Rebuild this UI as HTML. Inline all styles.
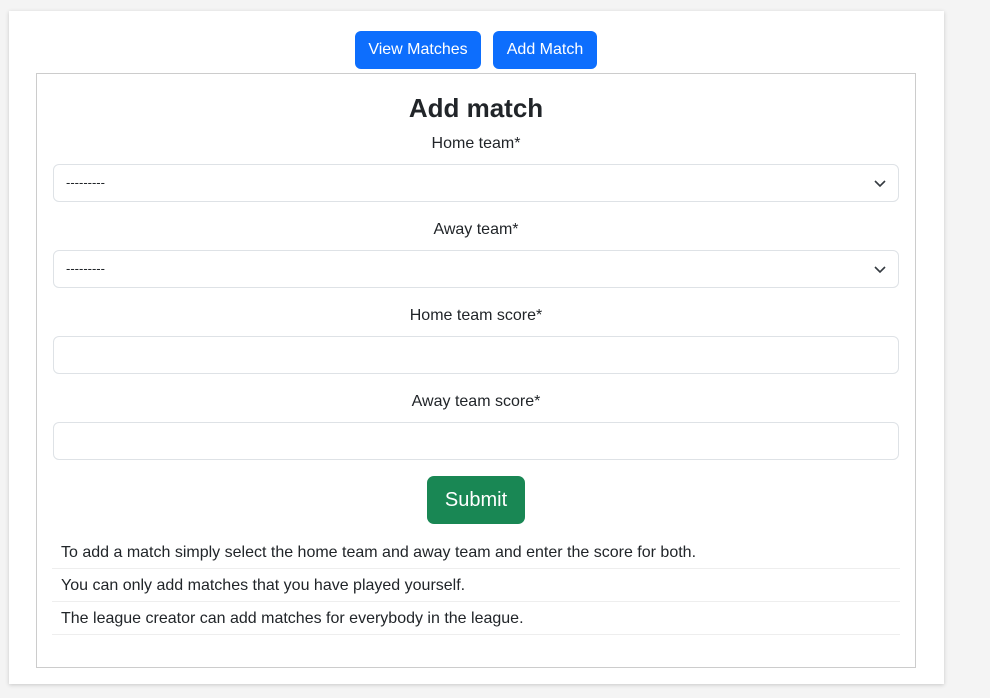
<!DOCTYPE html>
<html><head><style>
*{box-sizing:border-box;margin:0;padding:0}
body{width:990px;height:698px;background:#f4f4f4;font-family:"Liberation Sans",sans-serif;color:#212529;position:relative;overflow:hidden}
.card{position:absolute;left:9px;top:11px;width:935px;height:673px;background:#fff;box-shadow:0 1px 4px rgba(0,0,0,.18)}
.btn{position:absolute;top:31px;height:38px;background:#0d6efd;color:#fff;border-radius:6px;font-size:16px;line-height:38px;text-align:center}
.box{position:absolute;left:36px;top:73px;width:880px;height:595px;border:1px solid #ccc}
h1{position:absolute;left:0;width:100%;top:17px;text-align:center;font-size:26px;font-weight:bold;line-height:34px}
.lbl{position:absolute;left:0;width:100%;text-align:center;font-size:16px;line-height:20px}
.f{position:absolute;left:16px;width:846px;height:38px;border:1px solid #dee2e6;border-radius:6px;font-size:13px;line-height:36px;padding-left:12px}
.f svg{position:absolute;right:12px;top:13px}
.sub{position:absolute;left:390px;top:402px;width:98px;height:48px;background:#198754;color:#fff;border-radius:7px;font-size:20px;line-height:48px;text-align:center}
.li{position:absolute;left:15px;width:848px;height:33px;border-bottom:1px solid #eee;font-size:16px;line-height:20px;padding:7px 9px 0}
</style></head><body>
<div class="card"></div>
<div class="btn" style="left:355px;width:126px">View Matches</div>
<div class="btn" style="left:493px;width:104px">Add Match</div>
<div class="box">
<h1>Add match</h1>
<div class="lbl" style="top:60px">Home team*</div>
<div class="f" style="top:90px">---------<svg width="12" height="10" viewBox="0 0 12 10"><path d="M1 3l5 5 5-5" fill="none" stroke="#343a40" stroke-width="1.6"/></svg></div>
<div class="lbl" style="top:146px">Away team*</div>
<div class="f" style="top:176px">---------<svg width="12" height="10" viewBox="0 0 12 10"><path d="M1 3l5 5 5-5" fill="none" stroke="#343a40" stroke-width="1.6"/></svg></div>
<div class="lbl" style="top:232px">Home team score*</div>
<div class="f" style="top:262px"></div>
<div class="lbl" style="top:318px">Away team score*</div>
<div class="f" style="top:348px"></div>
<div class="sub">Submit</div>
<div class="li" style="top:462px">To add a match simply select the home team and away team and enter the score for both.</div>
<div class="li" style="top:495px">You can only add matches that you have played yourself.</div>
<div class="li" style="top:528px">The league creator can add matches for everybody in the league.</div>
</div>
</body></html>
